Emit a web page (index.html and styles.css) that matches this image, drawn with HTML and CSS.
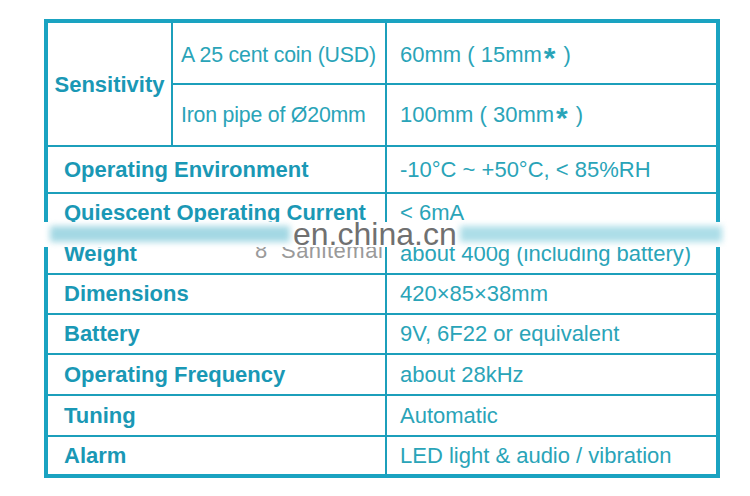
FILE: index.html
```html
<!DOCTYPE html>
<html>
<head>
<meta charset="utf-8">
<link rel="stylesheet" href="styles.css">
</head>
<body>
<div class="page">
  <div class="frame">
    <div class="grid">
      <div class="cell lab sens">Sensitivity</div>
      <div class="cell sub r1">A 25 cent coin (USD)</div>
      <div class="cell val r1">60mm ( 15mm<span class="ast">*</span>&nbsp;)</div>
      <div class="cell sub">Iron pipe of Ø20mm</div>
      <div class="cell val">100mm ( 30mm<span class="ast">*</span>&nbsp;)</div>

      <div class="cell lab wide">Operating Environment</div>
      <div class="cell val">-10°C ~ +50°C, &lt; 85%RH</div>

      <div class="cell lab wide">Quiescent Operating Current</div>
      <div class="cell val">&lt; 6mA</div>

      <div class="cell lab wide">Weight</div>
      <div class="cell val">about 400g (including battery)</div>

      <div class="cell lab wide">Dimensions</div>
      <div class="cell val">420×85×38mm</div>

      <div class="cell lab wide">Battery</div>
      <div class="cell val">9V, 6F22 or equivalent</div>

      <div class="cell lab wide">Operating Frequency</div>
      <div class="cell val">about 28kHz</div>

      <div class="cell lab wide">Tuning</div>
      <div class="cell val">Automatic</div>

      <div class="cell lab wide">Alarm</div>
      <div class="cell val">LED light &amp; audio / vibration</div>
    </div>
  </div>

  <div class="garble">8&nbsp;&nbsp;Sanitemai</div>
  <div class="banner">
    <div class="blur left"></div>
    <div class="blur right"></div>
    <div class="mark">en.china.cn</div>
  </div>
</div>
</body>
</html>
```

FILE: styles.css
```css
html, body {
  margin: 0;
  padding: 0;
  background: #ffffff;
}

.page {
  position: relative;
  width: 750px;
  height: 496px;
  overflow: hidden;
  font-family: "Liberation Sans", Arial, sans-serif;
}

.frame {
  margin: 19px 0 0 44px;
  width: 668px;
  border: 4px solid #1aa3c1;
}

.grid {
  display: grid;
  grid-template-columns: 123px 212px 329px;
  grid-template-rows: 60px 60px 45px 38px 39px 38px 38px 39px 39px 37px;
  gap: 2px;
  background: #1c9fbb;
}

.cell {
  background: #ffffff;
  display: flex;
  align-items: center;
  white-space: nowrap;
}

.lab {
  color: #1a98b5;
  font-weight: bold;
  font-size: 22px;
  padding-left: 16px;
}

.sens {
  grid-row: span 2;
  justify-content: center;
  padding-left: 0;
  padding-top: 2px;
}

.wide {
  grid-column: span 2;
}

.sub {
  color: #2aa4b8;
  font-size: 21.3px;
  padding-left: 8px;
  letter-spacing: -0.2px;
}

.val {
  color: #2aa4b8;
  font-size: 22px;
  padding-left: 13px;
}

.r1 {
  padding-top: 4px;
}

.ast {
  display: inline-block;
  font-size: 30px;
  line-height: 1;
  position: relative;
  top: 3px;
  margin-left: 2px;
  margin-right: 2px;
  font-weight: bold;
}

.garble {
  position: absolute;
  left: 255px;
  top: 238px;
  font-size: 22px;
  color: #9a9a9a;
  letter-spacing: 0.5px;
}

.banner {
  position: absolute;
  left: 0;
  top: 222px;
  width: 750px;
  height: 25px;
  background: #ffffff;
}

.blur {
  position: absolute;
  top: 4px;
  height: 16px;
  background: #a4d8e4;
  filter: blur(3px);
}

.blur.left {
  left: 50px;
  width: 240px;
}

.blur.right {
  left: 460px;
  width: 262px;
  background: #addee8;
}

.mark {
  position: absolute;
  left: 293px;
  top: -6px;
  font-size: 32px;
  color: #707070;
}
```
